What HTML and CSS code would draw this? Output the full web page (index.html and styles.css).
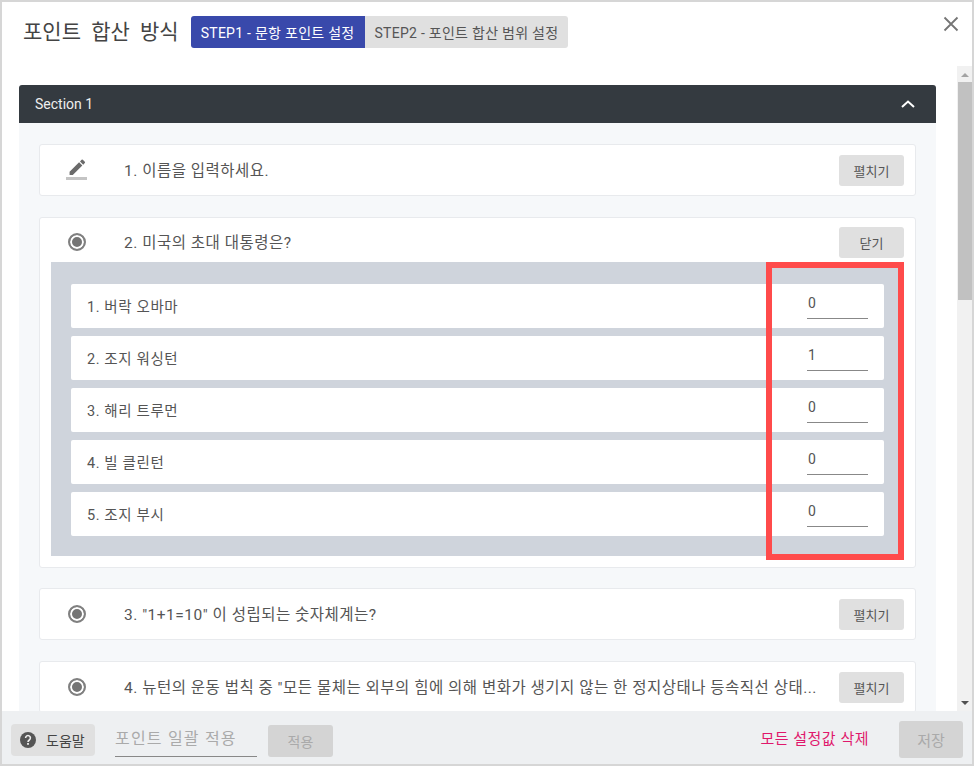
FILE: index.html
```html
<!DOCTYPE html>
<html lang="ko">
<head>
    <meta charset="UTF-8">
    <meta name="viewport" content="width=device-width, initial-scale=1.0">
    <title>포인트 합산 방식</title>
    <link rel="stylesheet" href="styles.css">
</head>
<body>
    <div class="dialog">
        <div class="dialog-header">
            <h1>포인트 합산 방식</h1>
            <div class="steps">
                <div class="step active">STEP1 - 문항 포인트 설정</div>
                <div class="step">STEP2 - 포인트 합산 범위 설정</div>
            </div>
            <svg class="close" width="16" height="16" viewBox="0 0 16 16"><path d="M1.5 1.5l13 13M14.5 1.5l-13 13" stroke="#757575" stroke-width="1.8" fill="none"/></svg>
        </div>

        <div class="dialog-body">
            <div class="scroll-area">
                <div class="section">
                    <div class="section-header">
                        <span>Section 1</span>
                        <svg width="16" height="10" viewBox="0 0 16 10"><path d="M2 8l6-5.5L14 8" stroke="#fff" stroke-width="2" fill="none"/></svg>
                    </div>
                    <div class="section-body">
                        <div class="card">
                            <div class="card-head">
                                <div class="card-icon">
                                    <svg width="22" height="24" viewBox="0 0 22 24"><path d="M3 17.25V21h3.75L17.81 9.94l-3.75-3.75L3 17.25zM20.71 7.04a1 1 0 0 0 0-1.41l-2.34-2.34a1 1 0 0 0-1.41 0l-1.83 1.83 3.75 3.75 1.83-1.83z" fill="#6a6a6a" transform="translate(1 -1) scale(.86)"/><rect x="0" y="19" width="21" height="3" fill="#c4c4c4"/></svg>
                                </div>
                                <div class="card-title">1. 이름을 입력하세요.</div>
                                <button class="btn">펼치기</button>
                            </div>
                        </div>

                        <div class="card open">
                            <div class="card-head">
                                <div class="card-icon"><span class="radio"></span></div>
                                <div class="card-title">2. 미국의 초대 대통령은?</div>
                                <button class="btn">닫기</button>
                            </div>
                            <div class="choices">
                                <div class="choice"><span>1. 버락 오바마</span><span class="point">0</span></div>
                                <div class="choice"><span>2. 조지 워싱턴</span><span class="point">1</span></div>
                                <div class="choice"><span>3. 해리 트루먼</span><span class="point">0</span></div>
                                <div class="choice"><span>4. 빌 클린턴</span><span class="point">0</span></div>
                                <div class="choice"><span>5. 조지 부시</span><span class="point">0</span></div>
                                <div class="highlight"></div>
                            </div>
                        </div>

                        <div class="card">
                            <div class="card-head">
                                <div class="card-icon"><span class="radio"></span></div>
                                <div class="card-title">3. "1+1=10" 이 성립되는 숫자체계는?</div>
                                <button class="btn">펼치기</button>
                            </div>
                        </div>

                        <div class="card">
                            <div class="card-head">
                                <div class="card-icon"><span class="radio"></span></div>
                                <div class="card-title">4. 뉴턴의 운동 법칙 중 "모든 물체는 외부의 힘에 의해 변화가 생기지 않는 한 정지상태나 등속직선 상태...</div>
                                <button class="btn">펼치기</button>
                            </div>
                        </div>
                    </div>
                </div>
            </div>
            <div class="scrollbar">
                <span class="arrow up"></span>
                <div class="track"><div class="thumb"></div></div>
                <span class="arrow down"></span>
            </div>
        </div>

        <div class="dialog-footer">
            <button class="help">
                <svg width="18" height="18" viewBox="0 0 18 18"><circle cx="9" cy="9" r="8" fill="#555"/><path d="M6.6 7a2.4 2.4 0 1 1 3.7 2c-.9.6-1.3 1-1.3 2" stroke="#eee" stroke-width="1.6" fill="none"/><rect x="8.1" y="12" width="1.8" height="1.8" fill="#eee"/></svg>
                도움말
            </button>
            <div class="bulk-input">포인트 일괄 적용</div>
            <button class="btn disabled apply">적용</button>
            <span class="reset">모든 설정값 삭제</span>
            <button class="btn disabled save">저장</button>
        </div>
    </div>
</body>
</html>
```

FILE: styles.css
```css
* {
    box-sizing: border-box;
}
body {
    margin: 0;
    width: 974px;
    height: 766px;
    padding: 2px;
    background-color: #d6d6d6;
    font-family: Roboto, "Noto Sans CJK KR", sans-serif;
    font-size: 14px;
    color: #555;
    overflow: hidden;
}
button {
    font-family: inherit;
    border: none;
    cursor: pointer;
}
.dialog {
    display: flex;
    flex-direction: column;
    height: 762px;
    background-color: #fff;
}
.dialog-header {
    display: flex;
    align-items: flex-start;
    height: 64px;
    padding: 14px 13px 0 21px;
}
.dialog-header h1 {
    margin: 1px 12px 0 0;
    font-size: 21px;
    font-weight: 400;
    line-height: 30px;
    word-spacing: 5px;
    color: #444;
}
.steps {
    display: flex;
    height: 32px;
    border-radius: 3px;
    overflow: hidden;
}
.step {
    display: flex;
    align-items: center;
    padding: 0 10px;
    background-color: #e0e0e0;
    font-size: 14px;
    letter-spacing: 0.27px;
    color: #555;
}
.step.active {
    background-color: #3949ab;
    color: #fff;
}
.close {
    margin-left: auto;
}
.dialog-body {
    display: flex;
    height: 645px;
    min-height: 0;
}
.scroll-area {
    flex: 1;
    padding: 19px 21px 0 17px;
    overflow: hidden;
}
.section-header {
    display: flex;
    justify-content: space-between;
    align-items: center;
    height: 38px;
    padding: 0 20px 0 16px;
    background-color: #343a40;
    border-radius: 3px 3px 0 0;
    color: #eee;
    font-size: 14px;
}
.section-body {
    padding: 21px 20px 0;
    background-color: #f6f8fa;
}
.card {
    margin-bottom: 21px;
    background-color: #fff;
    border: 1px solid #e8eaed;
    border-radius: 3px;
}
.card.open {
    margin-bottom: 20px;
}
.card-head {
    display: flex;
    align-items: center;
    height: 50px;
    padding-right: 11px;
}
.card.open .card-head {
    height: 44px;
    padding-top: 9px;
    align-items: flex-start;
}
.card-icon {
    display: flex;
    justify-content: center;
    width: 74px;
    margin-right: 10px;
}
.card.open .card-icon {
    margin-top: 6px;
}
.radio {
    display: block;
    width: 18px;
    height: 18px;
    border: 2px solid #808080;
    border-radius: 50%;
    background-color: #757575;
    box-shadow: inset 0 0 0 2px #fff;
}
.card-title {
    flex: 1;
    min-width: 0;
    margin-right: 14px;
    padding-bottom: 3px;
    white-space: nowrap;
    font-size: 15.5px;
    letter-spacing: 0.5px;
}
.card.open .card-title {
    padding-bottom: 0;
    margin-top: 3px;
}
.btn {
    flex: none;
    width: 65px;
    height: 31px;
    background-color: #e0e0e0;
    border-radius: 3px;
    font-size: 13px;
    color: #555;
}
.choices {
    position: relative;
    display: flex;
    flex-direction: column;
    gap: 8px;
    margin: 0 11px 11px;
    padding: 22px 20px 20px;
    background-color: #cfd4dc;
}
.choice {
    display: flex;
    justify-content: space-between;
    align-items: center;
    height: 44px;
    padding: 0 16px;
    background-color: #fff;
    border-radius: 2px;
    font-size: 14.5px;
    letter-spacing: 0.6px;
}
.choice > span:first-child {
    margin-bottom: 1px;
}
.point {
    width: 61px;
    height: 30px;
    margin-top: -5px;
    padding: 3px 0 0 1px;
    border-bottom: 1px solid #888;
    font-size: 14px;
    line-height: 22px;
    letter-spacing: 0;
}
.highlight {
    position: absolute;
    top: 0;
    right: 0;
    width: 138px;
    height: 298px;
    border: 6px solid #ff4b4b;
}
.scrollbar {
    display: flex;
    flex-direction: column;
    width: 15px;
    background-color: #f1f1f1;
}
.arrow {
    flex: none;
    align-self: center;
    width: 0;
    height: 0;
    border-left: 4px solid transparent;
    border-right: 4px solid transparent;
}
.arrow.up {
    margin: 7px 0 5px;
    border-bottom: 4px solid #a3a3a3;
}
.arrow.down {
    margin: 5px 0 6px;
    border-top: 4px solid #505050;
}
.track {
    flex: 1;
}
.thumb {
    height: 218px;
    margin-left: 1px;
    background-color: #c1c1c1;
}
.dialog-footer {
    display: flex;
    align-items: center;
    flex: 1;
    padding: 0 9px;
    background-color: #eef0f2;
}
.help {
    display: flex;
    align-items: center;
    gap: 9px;
    width: 84px;
    height: 32px;
    margin-top: 5px;
    padding: 0 0 0 8px;
    background-color: #e0e0e0;
    border-radius: 4px;
    font-size: 14px;
    color: #444;
}
.bulk-input {
    width: 142px;
    height: 32px;
    margin: 7px 11px 0 20px;
    border-bottom: 1px solid #888;
    font-size: 16px;
    line-height: 28px;
    letter-spacing: 1.2px;
    color: #aaa;
}
.btn.disabled {
    background-color: #d4d4d4;
    color: #aaa;
}
.apply {
    height: 32px;
    margin-top: 7px;
    font-size: 14px;
}
.reset {
    margin-left: auto;
    margin-right: 30px;
    font-size: 15px;
    letter-spacing: 0.5px;
    color: #e0186c;
}
.btn.save {
    width: 64px;
    height: 37px;
    margin-top: 3px;
    font-size: 15px;
}
```
